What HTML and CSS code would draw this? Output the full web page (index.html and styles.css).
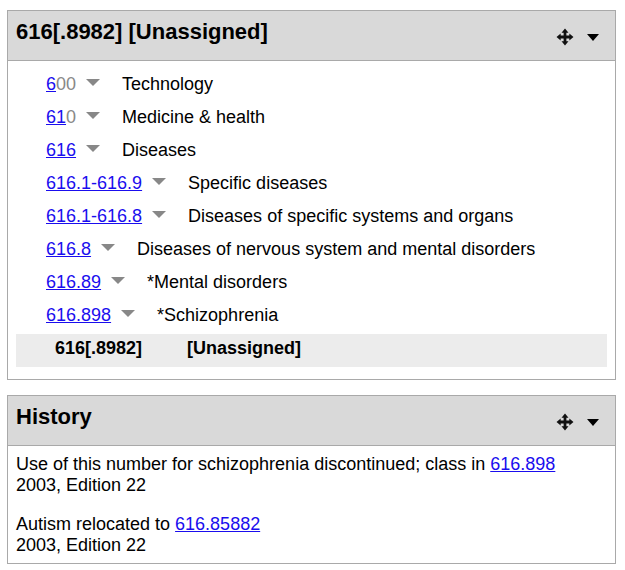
FILE: index.html
```html
<!DOCTYPE html>
<html>
<head>
<meta charset="utf-8">
<link rel="stylesheet" href="styles.css">
</head>
<body>
<div class="panel">
  <div class="panel-header">
    <h2 class="panel-title">616[.8982] [Unassigned]</h2>
    <div class="panel-tools">
      <svg class="move-icon" width="18" height="18" viewBox="0 0 17 17">
        <path d="M8.5 0.5 L11.8 4.4 L9.8 4.4 L9.8 7.2 L12.6 7.2 L12.6 5.2 L16.5 8.5 L12.6 11.8 L12.6 9.8 L9.8 9.8 L9.8 12.6 L11.8 12.6 L8.5 16.5 L5.2 12.6 L7.2 12.6 L7.2 9.8 L4.4 9.8 L4.4 11.8 L0.5 8.5 L4.4 5.2 L4.4 7.2 L7.2 7.2 L7.2 4.4 L5.2 4.4 Z" fill="#111"/>
      </svg>
      <span class="caret"></span>
    </div>
  </div>
  <div class="panel-body">
    <div class="row"><a href="#">6</a><span class="dim">00</span><span class="tri"></span><span class="label">Technology</span></div>
    <div class="row"><a href="#">61</a><span class="dim">0</span><span class="tri"></span><span class="label">Medicine &amp; health</span></div>
    <div class="row"><a href="#">616</a><span class="tri"></span><span class="label">Diseases</span></div>
    <div class="row"><a href="#">616.1-616.9</a><span class="tri"></span><span class="label">Specific diseases</span></div>
    <div class="row"><a href="#">616.1-616.8</a><span class="tri"></span><span class="label">Diseases of specific systems and organs</span></div>
    <div class="row"><a href="#">616.8</a><span class="tri"></span><span class="label">Diseases of nervous system and mental disorders</span></div>
    <div class="row"><a href="#">616.89</a><span class="tri"></span><span class="label">*Mental disorders</span></div>
    <div class="row"><a href="#">616.898</a><span class="tri"></span><span class="label">*Schizophrenia</span></div>
    <div class="row current"><span class="cur-num">616[.8982]</span><span class="cur-label">[Unassigned]</span></div>
  </div>
</div>

<div class="panel">
  <div class="panel-header">
    <h2 class="panel-title">History</h2>
    <div class="panel-tools">
      <svg class="move-icon" width="18" height="18" viewBox="0 0 17 17">
        <path d="M8.5 0.5 L11.8 4.4 L9.8 4.4 L9.8 7.2 L12.6 7.2 L12.6 5.2 L16.5 8.5 L12.6 11.8 L12.6 9.8 L9.8 9.8 L9.8 12.6 L11.8 12.6 L8.5 16.5 L5.2 12.6 L7.2 12.6 L7.2 9.8 L4.4 9.8 L4.4 11.8 L0.5 8.5 L4.4 5.2 L4.4 7.2 L7.2 7.2 L7.2 4.4 L5.2 4.4 Z" fill="#111"/>
      </svg>
      <span class="caret"></span>
    </div>
  </div>
  <div class="panel-body history">
    <p>Use of this number for schizophrenia discontinued; class in <a href="#">616.898</a><br>2003, Edition 22</p>
    <p>Autism relocated to <a href="#">616.85882</a><br>2003, Edition 22</p>
  </div>
</div>
</body>
</html>
```

FILE: styles.css
```css
html, body {
  margin: 0;
  padding: 0;
  background: #fff;
}

body {
  padding: 10px 9px 0 7px;
  font-family: "Liberation Sans", Arial, sans-serif;
  font-size: 18px;
  color: #000;
}

a {
  color: #1a0dee;
  text-decoration: underline;
}

.panel {
  border: 1px solid #a9a9a9;
  margin-bottom: 15px;
}

.panel-header {
  display: flex;
  align-items: flex-start;
  height: 49px;
  background: #d9d9d9;
  border-bottom: 1px solid #a9a9a9;
  padding: 0 16px 0 8px;
}

.panel-title {
  flex: 1;
  margin: 0;
  padding-top: 8px;
  font-size: 22px;
  font-weight: bold;
  line-height: normal;
}

.panel-tools {
  display: flex;
  align-items: center;
  margin-top: 17px;
}

.move-icon {
  display: block;
  margin-right: 13px;
}

.caret {
  display: block;
  width: 0;
  height: 0;
  border-left: 6px solid transparent;
  border-right: 6px solid transparent;
  border-top: 7px solid #000;
}

.panel-body {
  padding: 9px 8px 12px 8px;
}

.row {
  height: 29px;
  line-height: 29px;
  padding-bottom: 4px;
  padding-left: 30px;
  white-space: nowrap;
}

.dim {
  color: #888;
}

.tri {
  display: inline-block;
  width: 0;
  height: 0;
  border-left: 7px solid transparent;
  border-right: 7px solid transparent;
  border-top: 7px solid #888;
  margin: 0 22px 0 10px;
  vertical-align: 4px;
}

.row.current {
  background: #ececec;
  font-weight: bold;
  padding-left: 39px;
}

.cur-label {
  margin-left: 45px;
}

.history {
  padding: 8px 8px 7px 8px;
}

.history p {
  margin: 0;
}

.history p + p {
  margin-top: 18px;
}
```
